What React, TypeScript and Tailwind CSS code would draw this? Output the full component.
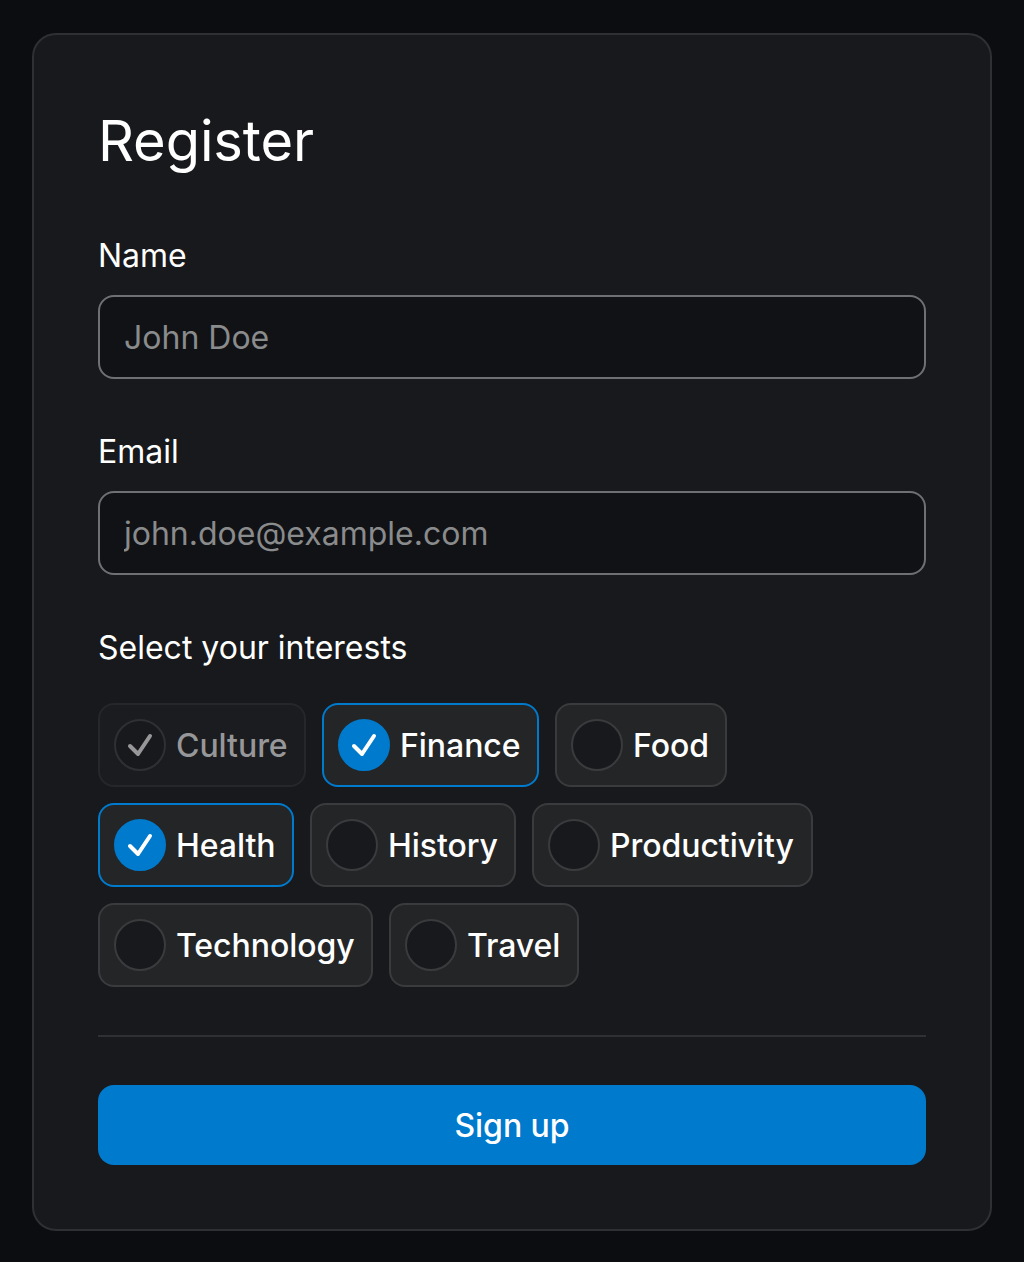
import React from "react";

type Interest = { label: string; width: string; checked?: boolean; disabled?: boolean };

const rows: Interest[][] = [
  [
    { label: "Culture", width: "w-[208px]", checked: true, disabled: true },
    { label: "Finance", width: "w-[217px]", checked: true },
    { label: "Food", width: "w-[172px]" },
  ],
  [
    { label: "Health", width: "w-[196px]", checked: true },
    { label: "History", width: "w-[206px]" },
    { label: "Productivity", width: "w-[281px]" },
  ],
  [
    { label: "Technology", width: "w-[275px]" },
    { label: "Travel", width: "w-[190px]" },
  ],
];

function Check() {
  return (
    <svg className="shrink-0" width="28" height="28" viewBox="0 0 28 28" fill="none" stroke="currentColor" strokeWidth="4" strokeLinecap="round" strokeLinejoin="round">
      <path d="M4 15L12 23L24 5" />
    </svg>
  );
}

function Chip({ label, width, checked, disabled }: Interest) {
  const box = disabled
    ? "border-[#26272a] bg-[#1b1c1f] text-[#979799]"
    : checked
      ? "border-[#007acc] bg-[#242527] text-white"
      : "border-[#3a3b3d] bg-[#242527] text-white";
  const dot = disabled
    ? "border-[#2f3033] bg-[#18191c]"
    : checked
      ? "border-[#007acc] bg-[#007acc]"
      : "border-[#3a3b3d] bg-[#18191c]";
  return (
    <label className={`flex h-21 items-center rounded-2xl border-2 pl-3.5 ${width} ${box}`}>
      <span className={`mr-2.5 flex size-13 shrink-0 items-center justify-center rounded-full border-2 ${dot}`}>
        {checked && <Check />}
      </span>
      <span className="pt-0.5 text-[32px] leading-12 font-medium tracking-[-0.05px] whitespace-nowrap">{label}</span>
    </label>
  );
}

function Field({ label, placeholder, type }: { label: string; placeholder: string; type: string }) {
  return (
    <label className="mb-12 block">
      <span className="mb-[15px] block pt-px text-[32px] leading-12">{label}</span>
      <input
        type={type}
        placeholder={placeholder}
        className="block h-21 w-full rounded-2xl border-2 border-[#6f7073] bg-[#111215] px-6 text-[32px] placeholder:text-[#8a8b8c]"
      />
    </label>
  );
}

export default function App() {
  return (
    <div className="h-[1262px] w-[1024px] bg-[#0c0d11] px-8 pt-[33px] font-['Inter',sans-serif] text-white antialiased">
      <form className="h-[1198px] rounded-3xl border-2 border-[#2f3033] bg-[#18191c] px-16 pt-16">
        <h1 className="mb-12 text-[56px] leading-[84px] tracking-[-0.1px]">Register</h1>
        <Field label="Name" placeholder="John Doe" type="text" />
        <Field label="Email" placeholder="john.doe@example.com" type="email" />
        <p className="mb-[31px] pt-px text-[32px] leading-12">Select your interests</p>
        <div className="flex flex-col gap-4">
          {rows.map((row, i) => (
            <div key={i} className="flex gap-4">
              {row.map((item) => (
                <Chip key={item.label} {...item} />
              ))}
            </div>
          ))}
        </div>
        <hr className="my-12 border-t-2 border-[#2f3033]" />
        <button type="button" className="h-20 w-full rounded-2xl bg-[#007acc] pt-0.5 text-[32px] font-medium tracking-[-0.05px]">
          Sign up
        </button>
      </form>
    </div>
  );
}
